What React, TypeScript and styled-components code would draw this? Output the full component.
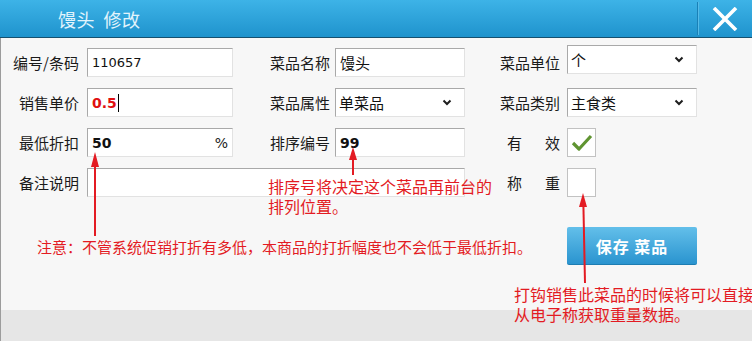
import styled, { createGlobalStyle } from "styled-components";

const GlobalStyle = createGlobalStyle`
  body {
    margin: 0;
    background: #ffffff;
    font-family: "Noto Sans CJK SC", "Noto Sans", sans-serif;
  }
`;

const RED = "#e31b23";

const Chevron = () => (
  <svg width="10" height="7" viewBox="0 0 10 7">
    <path d="M1.5 1.5 L5 5 L8.5 1.5" fill="none" stroke="#1e1e1e" strokeWidth="2" />
  </svg>
);

const CheckMark = () => (
  <svg width="22" height="18" viewBox="0 0 22 18">
    <path
      d="M2 9 L8 15 L20 2"
      fill="none"
      stroke="#5f9431"
      strokeWidth="3.2"
      strokeLinejoin="round"
    />
  </svg>
);

const App = () => {
  return (
    <>
      <GlobalStyle />
      <Window>
        <TitleBar>
          <Title>馒头 修改</Title>
          <CloseArea>
            <svg width="26" height="24" viewBox="0 0 26 24">
              <path d="M2 1 L24 23 M24 1 L2 23" stroke="#ffffff" strokeWidth="3.6" />
            </svg>
          </CloseArea>
        </TitleBar>

        <Body>
          <FormGrid>
            <Label $pad={8}>编号/条码</Label>
            <Input>
              <Value>110657</Value>
            </Input>
            <Label $pad={5}>菜品名称</Label>
            <Input>
              <CjkValue>馒头</CjkValue>
            </Input>
            <Label $pad={7}>菜品单位</Label>
            <Select $lift>
              <CjkValue>个</CjkValue>
              <Chevron />
            </Select>

            <Label $pad={8}>销售单价</Label>
            <Input>
              <BoldValue $red>0.5</BoldValue>
              <Caret />
            </Input>
            <Label $pad={5}>菜品属性</Label>
            <Select>
              <CjkValue>单菜品</CjkValue>
              <Chevron />
            </Select>
            <Label $pad={7}>菜品类别</Label>
            <Select>
              <CjkValue>主食类</CjkValue>
              <Chevron />
            </Select>

            <Label $pad={8}>最低折扣</Label>
            <Input>
              <BoldValue>50</BoldValue>
              <Unit>%</Unit>
            </Input>
            <Label $pad={5}>排序编号</Label>
            <Input>
              <BoldValue>99</BoldValue>
            </Input>
            <Label $pad={7}>
              <Spread>
                <span>有</span>
                <span>效</span>
              </Spread>
            </Label>
            <CheckBox>
              <CheckMark />
            </CheckBox>

            <Label $pad={8}>备注说明</Label>
            <Input $span={3} />
            <Label $pad={7}>
              <Spread>
                <span>称</span>
                <span>重</span>
              </Spread>
            </Label>
            <CheckBox />
          </FormGrid>

          <ActionRow>
            <Note>注意：不管系统促销打折有多低，本商品的打折幅度也不会低于最低折扣。</Note>
            <SaveButton>保存 菜品</SaveButton>
          </ActionRow>
        </Body>

        <Footer />

        <Annotation $top={176} $left={268}>
          排序号将决定这个菜品再前台的
          <br />
          排列位置。
        </Annotation>
        <Annotation $top={284} $left={514}>
          打钩销售此菜品的时候将可以直接
          <br />
          从电子称获取重量数据。
        </Annotation>

        <Arrows width="752" height="341" viewBox="0 0 752 341">
          <g stroke={RED} strokeWidth="2" fill={RED}>
            <line x1="95" y1="160" x2="95" y2="236" />
            <polygon points="95,152 91,167 99,167" stroke="none" />
            <line x1="353" y1="155" x2="353" y2="175" />
            <polygon points="353,147 349,160 357,160" stroke="none" />
            <line x1="583.3" y1="200" x2="585" y2="283" />
            <polygon points="583,193 579,207 587,207" stroke="none" />
          </g>
        </Arrows>
      </Window>
    </>
  );
};

export default App;

const Window = styled.div`
  position: relative;
  width: 752px;
  height: 341px;
  overflow: hidden;
  display: flex;
  flex-direction: column;
  background: #f7f7f7;
`;

const TitleBar = styled.div`
  height: 37px;
  flex-shrink: 0;
  display: flex;
  align-items: center;
  background: linear-gradient(#3db3e7, #1f93cd);
  border-bottom: 1px solid #16506f;
`;

const Title = styled.div`
  margin-left: 58px;
  color: #e2f4fc;
  font-size: 18px;
  letter-spacing: 0.5px;
  word-spacing: 4px;
`;

const CloseArea = styled.div`
  margin-left: auto;
  width: 54px;
  height: 33px;
  display: flex;
  align-items: center;
  justify-content: center;
  border-left: 1px solid #1a80b6;
  box-shadow: inset 1px 0 0 #56bbe8;
`;

const Body = styled.div`
  flex: 1;
  border-left: 1px solid #9c9c9c;
  padding-top: 10px;
`;

const FormGrid = styled.div`
  display: grid;
  grid-template-columns: 86px 146px 102px 130px 102px 130px;
  grid-auto-rows: 29px;
  row-gap: 11px;
`;

const Label = styled.div<{ $pad: number }>`
  display: flex;
  align-items: center;
  justify-content: flex-end;
  padding-right: ${(p) => p.$pad}px;
  font-size: 15px;
  color: #1a1a1a;
  white-space: nowrap;
`;

const Spread = styled.span`
  width: 53px;
  display: flex;
  justify-content: space-between;
`;

const Input = styled.div<{ $span?: number; $lift?: boolean }>`
  grid-column: span ${(p) => p.$span ?? 1};
  display: flex;
  align-items: center;
  padding: 0 4px;
  background: #ffffff;
  border-top: 1px solid #a9a9a9;
  border-left: 1px solid #a9a9a9;
  border-right: 1px solid #e2e2e2;
  border-bottom: 1px solid #e2e2e2;
  margin-top: ${(p) => (p.$lift ? -3 : 0)}px;
  margin-bottom: ${(p) => (p.$lift ? 3 : 0)}px;
`;

const Select = styled(Input)`
  justify-content: space-between;
  padding: 0 12px 0 3px;
`;

const Value = styled.span`
  font-family: "DejaVu Sans", sans-serif;
  font-size: 13px;
  color: #111;
`;

const CjkValue = styled.span`
  font-size: 15px;
  color: #111;
`;

const BoldValue = styled.span<{ $red?: boolean }>`
  font-family: "DejaVu Sans", sans-serif;
  font-weight: bold;
  font-size: 14px;
  color: ${(p) => (p.$red ? "#e01010" : "#111")};
`;

const Caret = styled.span`
  width: 1px;
  height: 18px;
  background: #000;
  margin-left: 1px;
`;

const Unit = styled.span`
  margin-left: auto;
  font-family: "DejaVu Sans", sans-serif;
  font-size: 14px;
  color: #222;
`;

const CheckBox = styled.div`
  width: 29px;
  height: 29px;
  box-sizing: border-box;
  display: flex;
  align-items: center;
  justify-content: center;
  background: #ffffff;
  border: 1px solid #c2c2c2;
`;

const ActionRow = styled.div`
  margin-top: 30px;
  display: flex;
  align-items: center;
  padding: 0 55px 0 36px;
`;

const Note = styled.div`
  font-size: 15px;
  color: ${RED};
  white-space: nowrap;
`;

const SaveButton = styled.button`
  margin-left: auto;
  width: 130px;
  height: 38px;
  border: none;
  border-bottom: 1px solid #1d7db2;
  border-radius: 2px;
  background: linear-gradient(#63bfea, #2a94cf);
  color: #ffffff;
  font-family: "Noto Sans CJK SC", sans-serif;
  font-weight: bold;
  font-size: 16px;
  letter-spacing: 1px;
`;

const Footer = styled.div`
  height: 31px;
  flex-shrink: 0;
  background: #e6e6e6;
  border-left: 1px solid #9c9c9c;
`;

const Annotation = styled.div<{ $top: number; $left: number }>`
  position: absolute;
  top: ${(p) => p.$top}px;
  left: ${(p) => p.$left}px;
  font-size: 16px;
  line-height: 20px;
  color: ${RED};
  white-space: nowrap;
`;

const Arrows = styled.svg`
  position: absolute;
  top: 0;
  left: 0;
  pointer-events: none;
`;
